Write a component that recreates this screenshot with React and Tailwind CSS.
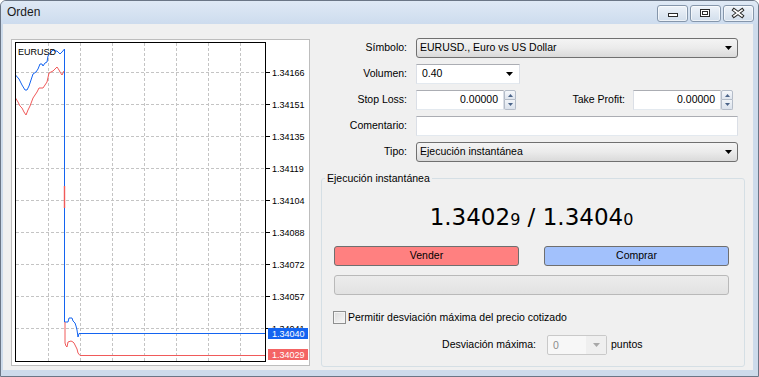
import React from 'react'

const axis = [
  ['1.34166', 72],
  ['1.34151', 104],
  ['1.34135', 136],
  ['1.34119', 168],
  ['1.34104', 200],
  ['1.34088', 232],
  ['1.34072', 264],
  ['1.34057', 296],
]
const vgrid = [48, 80, 112, 144, 176, 208, 240]
const font = 'Liberation Sans, Arial, sans-serif'

function Chart() {
  return (
    <svg width="297" height="325" viewBox="12 40 297 325" className="block">
      <defs>
        <clipPath id="hidden-label">
          <rect x="268" y="318" width="40" height="10" />
        </clipPath>
      </defs>
      {[...axis.map((a) => a[1]), 328].map((y) => (
        <g key={y} shapeRendering="crispEdges">
          <line x1="16" x2="265" y1={y + 0.5} y2={y + 0.5} stroke="#c4c4c4" strokeDasharray="3 2" />
          <line x1="265" x2="270" y1={y + 0.5} y2={y + 0.5} stroke="#000" />
        </g>
      ))}
      {vgrid.map((x) => (
        <line key={x} x1={x + 0.5} x2={x + 0.5} y1="43" y2="361" stroke="#c4c4c4" strokeDasharray="3 2" shapeRendering="crispEdges" />
      ))}

      {/* ask */}
      <polyline
        fill="none"
        stroke="#1464f0"
        points="15.5,75 19,79 22,85 25,90 27,90 29,86 31,80 33,74 36,72 38,69 40,64 42,64 43,66 45,63 47,62 48,56 50,53 53,50 55,51 57,51 59,53 60,54 62,52 64.5,49 64.5,322 68,322 69,318 72,318 73,321 75,323 76,326 77,330 78,337 79,333.5 265,333.5"
      />
      {/* bid */}
      <polyline
        fill="none"
        stroke="#f05a5a"
        points="15.5,98 18,102 20,106 22,108 24,112 26,115 28,110 30,106 33,98 35,95 37,92 39,88 43,88 45,85 47,82 49,73 51,72 53,71 55,69 57,67 59,70 60,72 62,75 64,71"
      />
      <line x1="64.5" x2="64.5" y1="186" y2="208" stroke="#f05a5a" strokeWidth="1.4" />
      <polyline
        fill="none"
        stroke="#f05a5a"
        points="65,322 65,343 66,346 67,347 68,342 71,341 73,342 74,343 76,347 77,349 78,353 80,355.5 265,355.5"
      />

      <rect x="15.5" y="42.5" width="250" height="319" fill="none" stroke="#000" shapeRendering="crispEdges" />
      <text x="18" y="55" fontSize="9" fontFamily={font} fill="#000">EURUSD</text>

      {axis.map(([label, y]) => (
        <text key={label} x="272" y={y + 3.5} fontSize="9" fontFamily={font} fill="#000">{label}</text>
      ))}
      {/* 1.34041 sits under the ask label, only its top shows */}
      <g clipPath="url(#hidden-label)">
        <text x="272" y="331.5" fontSize="9" fontFamily={font} fill="#000">1.34041</text>
      </g>
      <rect x="268" y="328" width="40" height="11" fill="#1464f0" />
      <text x="272" y="337" fontSize="9" fontFamily={font} fill="#fff">1.34040</text>
      <rect x="268" y="349" width="40" height="11" fill="#f46464" />
      <text x="272" y="358" fontSize="9" fontFamily={font} fill="#fff">1.34029</text>
    </svg>
  )
}

function Arrow({ color = '#000' }) {
  return (
    <svg width="7" height="4" viewBox="0 0 7 4">
      <path d="M0 0h7L3.5 4z" fill={color} />
    </svg>
  )
}

function Combo({ text }) {
  return (
    <div className="w-[322px] h-[20px] flex items-center justify-between pl-[3px] pr-[5px] border border-[#707070] rounded-[3px] bg-linear-to-b from-[#f4f4f4] via-[#ebebeb] to-[#dadada]">
      <span>{text}</span>
      <Arrow />
    </div>
  )
}

function Spin({ value }) {
  return (
    <div className="w-[100px] h-[20px] flex">
      <div className="w-[88px] h-full flex items-center justify-end pr-[5px] bg-white border border-[#abadb3] border-l-[#dbdfe6] border-r-[#dbdfe6] border-b-[#e3e9ef]">
        {value}
      </div>
      <div className="w-[12px] h-full flex flex-col">
        <div className="h-[10px] flex items-center justify-center border border-[#b4bcc8] rounded-t-[2px] bg-linear-to-b from-[#f6f8fb] to-[#dfe5ee]">
          <svg width="5" height="3" viewBox="0 0 5 3"><path d="M0 3h5L2.5 0z" fill="#4b6489" /></svg>
        </div>
        <div className="h-[10px] flex items-center justify-center border border-t-0 border-[#b4bcc8] rounded-b-[2px] bg-linear-to-b from-[#f1f4f8] to-[#dbe2ec]">
          <svg width="5" height="3" viewBox="0 0 5 3"><path d="M0 0h5L2.5 3z" fill="#4b6489" /></svg>
        </div>
      </div>
    </div>
  )
}

function Row({ label, children }) {
  return (
    <div className="h-[20px] flex items-center">
      <span className="w-[86px] text-right">{label}</span>
      <div className="ml-[9px] flex items-center">{children}</div>
    </div>
  )
}

function CaptionButton({ children }) {
  return (
    <div className="w-[31px] h-[17px] flex border border-[#8596ab] rounded-[3px] bg-linear-to-b from-[#eef3f9] to-[#d2deec] shadow-[inset_0_0_0_1px_rgba(255,255,255,0.6)]">
      <svg width="29" height="15" viewBox="0 0 29 15">{children}</svg>
    </div>
  )
}

export default function App() {
  return (
    <div className="w-[759px] h-[377px] flex flex-col bg-[#cddbeb] border border-[#6b7686] rounded-t-[6px] overflow-hidden font-['Liberation_Sans',Arial,sans-serif] text-[10.5px] text-black">
      {/* title bar */}
      <div className="h-[23px] flex items-start justify-between pl-[6px] pr-[4px] bg-linear-to-b from-[#dfe9f5] to-[#cddcee]">
        <span className="mt-[4px] text-[12px] leading-[15px] text-[#1a1a1a]">Orden</span>
        <div className="mt-[4px] flex gap-[2px]">
          <CaptionButton>
            <rect x="10.5" y="7.5" width="9" height="3" fill="#fff" stroke="#2b2b2b" />
          </CaptionButton>
          <CaptionButton>
            <rect x="9.5" y="3.5" width="9" height="7" fill="#fff" stroke="#2b2b2b" />
            <rect x="11.5" y="5.5" width="5" height="3" fill="none" stroke="#2b2b2b" />
          </CaptionButton>
          <CaptionButton>
            <path d="M10 4L18 10M18 4L10 10" stroke="#2b2b2b" strokeWidth="3.6" strokeLinecap="square" />
            <path d="M10 4L18 10M18 4L10 10" stroke="#fff" strokeWidth="1.6" strokeLinecap="square" />
          </CaptionButton>
        </div>
      </div>

      {/* body */}
      <div className="flex-1 ml-[2px] mr-[5px] flex bg-[#f0f0f0] pl-[8px]">
        <div className="mt-[15px] w-[299px] h-[327px] border border-[#bdbdbd] bg-white">
          <Chart />
        </div>

        <div className="flex-1 pl-[11px] pr-[8px] pt-[14px] flex flex-col">
          <div className="flex flex-col gap-[6px]">
            <Row label="Símbolo:">
              <Combo text="EURUSD., Euro vs US Dollar" />
            </Row>
            <Row label="Volumen:">
              <div className="w-[104px] h-[20px] flex items-center justify-between pl-[5px] pr-[6px] bg-white border border-[#abadb3] border-l-[#dbdfe6] border-r-[#dbdfe6] border-b-[#e3e9ef]">
                <span>0.40</span>
                <Arrow />
              </div>
            </Row>
            <Row label="Stop Loss:">
              <Spin value="0.00000" />
              <span className="w-[109px] text-right">Take Profit:</span>
              <div className="ml-[8px]">
                <Spin value="0.00000" />
              </div>
            </Row>
            <Row label="Comentario:">
              <div className="w-[322px] h-[20px] bg-white border border-[#abadb3] border-l-[#dbdfe6] border-r-[#dbdfe6] border-b-[#e3e9ef]" />
            </Row>
            <Row label="Tipo:">
              <Combo text="Ejecución instantánea" />
            </Row>
          </div>

          <fieldset className="mt-[10px] w-[424px] border border-[#d5dfe5] rounded-[3px] pl-[12px] pr-[15px] pb-[11px]">
            <legend className="-ml-[9px] px-[2px] leading-[13px]">Ejecución instantánea</legend>
            <div className="pt-[18px] h-[46px] text-center leading-[28px] font-['DejaVu_Sans',Verdana,sans-serif] text-[23px]">
              1.3402<span className="text-[16px]">9</span> / 1.3404<span className="text-[16px]">0</span>
            </div>
            <div className="mt-[15px] flex justify-between">
              <div className="w-[185px] h-[20px] flex items-center justify-center border border-[#6f6f6f] rounded-[3px] bg-[#ff8080]">Vender</div>
              <div className="w-[185px] h-[20px] flex items-center justify-center border border-[#6f6f6f] rounded-[3px] bg-[#a2c1fc]">Comprar</div>
            </div>
            <div className="mt-[9px] h-[20px] border border-[#b9b9b9] rounded-[3px] bg-linear-to-b from-[#ececec] to-[#e2e2e2]" />
            <div className="mt-[16px] h-[13px] flex items-center -ml-px">
              <div className="w-[13px] h-[13px] border border-[#8e8f8f] bg-linear-to-br from-[#dcdcdc] to-[#f8f8f8] shadow-[inset_0_0_0_1px_#f4f4f4]" />
              <span className="ml-[2px]">Permitir desviación máxima del precio cotizado</span>
            </div>
            <div className="mt-[11px] h-[20px] flex items-center">
              <span className="w-[202px] text-right">Desviación máxima:</span>
              <div className="ml-[11px] w-[60px] h-[20px] flex border border-[#c9c9c9] rounded-[2px] bg-[#f7f7f7]">
                <span className="flex-1 pl-[5px] leading-[18px] text-[#8d8d8d]">0</span>
                <div className="w-[20px] flex items-center justify-center bg-[#efefef]">
                  <Arrow color="#a8a8a8" />
                </div>
              </div>
              <span className="ml-[4px]">puntos</span>
            </div>
          </fieldset>
        </div>
      </div>

      <div className="h-[6px]" />
    </div>
  )
}
